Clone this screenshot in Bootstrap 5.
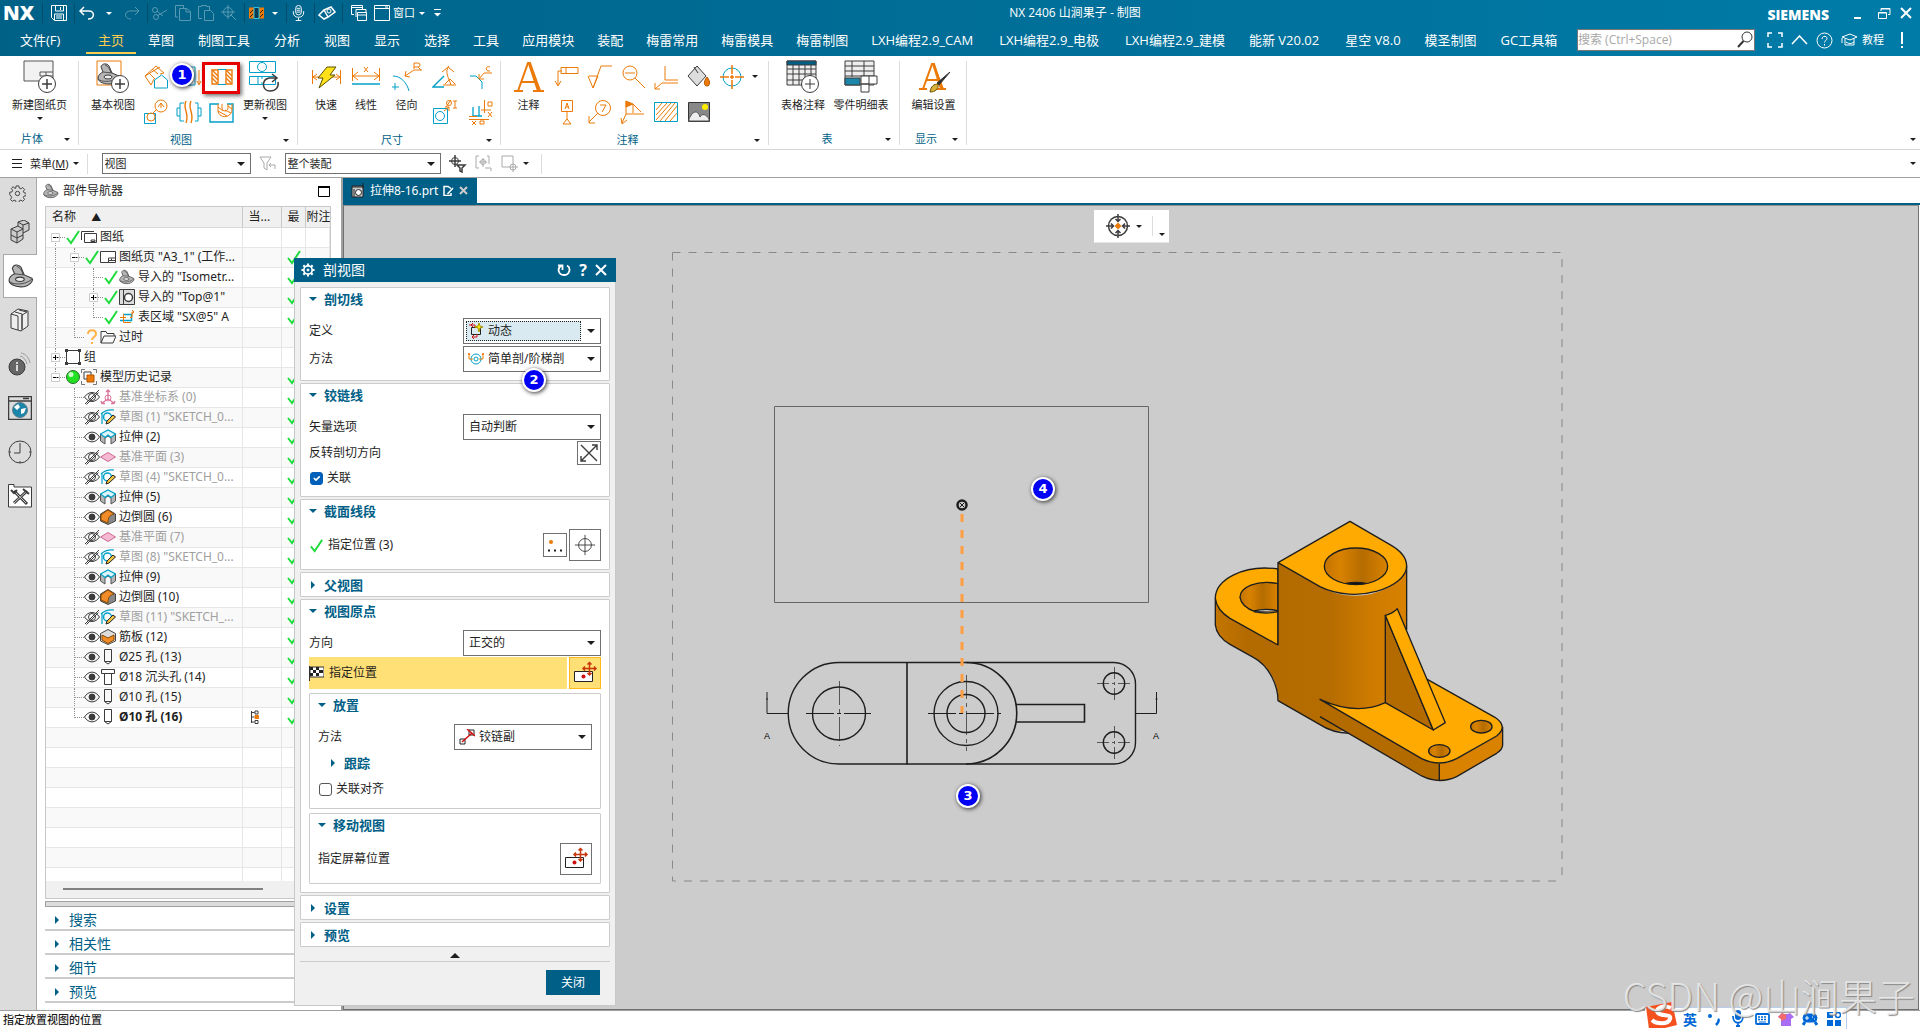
<!DOCTYPE html>
<html lang="zh-CN">
<head>
<meta charset="utf-8">
<meta name="viewport" content="width=device-width, initial-scale=1">
<title>NX 2406 - 制图</title>
<link href="https://cdn.jsdelivr.net/npm/bootstrap@5.3.0/dist/css/bootstrap.min.css" rel="stylesheet">
<script src="https://cdn.jsdelivr.net/npm/bootstrap@5.3.0/dist/js/bootstrap.bundle.min.js"></script>
<style>
:root{--teal:#005f87;--or:#ec7a08;--cy:#00a0c8;--dk:#3c3c3c}
body{font:12px/16px "Noto Sans","Noto Sans CJK SC",sans-serif;color:#1e1e1e;background:#fff;overflow:hidden}
svg{flex:none;display:block;fill:none;stroke:currentColor}
button{background:none;border:0;padding:0;color:inherit;font:inherit}
.o{stroke:var(--or)}.c{stroke:var(--cy)}.k{stroke:var(--dk)}.w{fill:#fff}
.caret{width:0;height:0;border:4px solid transparent;border-top-color:currentColor;border-bottom:0;flex:none}
.caret.sm{border-width:3px;border-bottom:0}
.ui-head{background:linear-gradient(90deg,#006187,#007ba8);color:#fff;height:56px;font-family:"Open Sans","Noto Sans CJK SC",sans-serif}
.title-row{height:26px}
.title-row .tool{width:23px;height:26px;display:flex;align-items:center;justify-content:center}
.dim{opacity:.35}
.vsep{width:1px;height:20px;background:#004c6b;flex:none}
.lsep{width:1px;height:20px;background:#dcdcdc;flex:none}
.tiny{font-size:11px}
.logo-nx{font-size:20px;font-weight:800;width:42px;padding-left:3px}
.doc-title{left:230px;right:0;text-align:center;pointer-events:none}
.brand{font:800 14px/16px "Open Sans",sans-serif}
.tab-row{height:28px}
.tab-row .ribbon-tab{color:#fff;font-size:13px;line-height:24px;padding:2px 12px 0;height:28px;text-decoration:none;white-space:nowrap;border-bottom:2px solid transparent}
.tab-row .ribbon-tab:nth-child(n+9):nth-child(-n+15){padding-left:11px}
.tab-row .ribbon-tab.lat{padding-right:14px}
.tab-row .ribbon-tab.active{color:#ffcc4d;border-color:#ffcc4d}
.tab-row .file-tab{width:86px;padding-left:20px}
.find-box{width:178px;height:22px;background:#fff;border:1px solid #777}
.find-box input{border:0;outline:0;width:100%;font-size:12px;padding:0;color:#333}
.find-box input::placeholder{color:#a8a8a8}
.ribbon{height:94px;border-bottom:1px solid #d8d8d8;font-size:11px}
.rgroup{padding-top:3px;position:relative;display:flex;flex-direction:column}
.rgroup::after{content:"";position:absolute;right:0;top:5px;bottom:4px;width:1px;background:#dcdcdc}
.rbody{height:70px;display:flex}
.big{display:flex;flex-direction:column;align-items:center;padding-top:1px;white-space:nowrap}
.big span{margin-top:3px;line-height:16px}
.big .caret{margin-top:4px}
.smalls{display:grid;grid-auto-flow:column;grid-template-rows:35px 35px;grid-auto-columns:33px}
.smalls button{display:flex;align-items:center;justify-content:center;position:relative}
.smalls.wide{grid-auto-columns:36px}
.rfoot{height:20px;line-height:16px;display:flex;align-items:center;color:var(--teal);padding-right:9px;margin-top:2px}
.rfoot span{flex:1;text-align:center}
.rfoot .caret,.big .caret{color:#1e1e1e;border-width:3px;border-bottom:0}
.hot{position:absolute;left:-3px;top:3px;width:38px;height:32px;border:3px solid #e60000;box-shadow:2px 2px 4px #777}
.pin{position:absolute;width:24px;height:24px;border-radius:50%;border:2px solid #fff;background:#0000f5;color:#fff;font:700 13px/20px "DejaVu Sans",sans-serif;text-align:center;box-shadow:1px 1px 4px #333;z-index:9}
.filterbar{height:28px;border-bottom:1px solid #a0a0a0}
.filterbar .pick{height:21px;font-size:11px;padding-left:2px}
.after-menu{margin:0 10px 0 8px}
.pick{appearance:none;border:1px solid #707070;border-radius:0;background:#fff url("data:image/svg+xml,%3Csvg xmlns='http://www.w3.org/2000/svg' width='8' height='4'%3E%3Cpath d='M0 0h8l-4 4z' fill='%231e1e1e'/%3E%3C/svg%3E") no-repeat right 5px center;font:inherit;color:inherit;padding:0 16px 0 5px;outline:0}
.strip{width:37px;background:#dcdcdc;border-right:1px solid #a8a8a8}
.strip button{width:36px;height:44px;padding-left:4px;display:flex;align-items:center;justify-content:center;color:var(--dk)}
.strip .first{height:32px;padding:0}
.strip .on{background:#fff;border:1px solid #a8a8a8;border-right:0;margin-left:3px;width:34px;padding:0}
.navi{width:306px;padding:0 10px 0 8px;border-right:2px solid #a0a0a0}
.navi-title{height:26px;gap:4px;margin-bottom:2px;padding-right:1px}
.treebox{height:693px;border:1px solid #c8c8c8;background:#f0f0f0}
.treeview{height:674px;overflow:hidden}
.tree{table-layout:fixed;width:100%;border-collapse:collapse;background:#fff}
.tree th{height:20px;background:#f0f0f0;font-weight:400;border-right:1px solid #c8c8c8;border-bottom:1px solid #d8d8d8;padding:0 0 0 6px;overflow:hidden;white-space:nowrap}
.tree th:last-child{padding-left:1px;border-right:0}
.tree td{height:20px;padding:0;border-right:1px solid #e6e6e6;border-bottom:1px solid #e6e6e6;overflow:hidden;white-space:nowrap}
.tree tr:nth-child(even) td{background:#f9f9f9}
.sorted{font-size:10px;margin-left:12px}
.node{display:flex;align-items:center;height:19px}
.node .lbl{margin-left:3px}
.off .lbl{color:#a0a0a0}
.slot{width:19px;height:19px;position:relative;flex:none}
.slot::before{content:"";position:absolute;left:9px;top:0;bottom:-1px;border-left:1px dotted #909090}
.slot.n::before{display:none}.slot.d::before{top:10px}.slot.u::before{bottom:9px}
.slot.t::after{content:"";position:absolute;left:10px;right:0;top:9px;border-top:1px dotted #909090}
.slot svg{position:absolute;left:5px;top:5px;background:#fff}
.hscroll{height:2px;background:#808080;width:200px;margin:7px 0 0 17px}
.split{height:6px;margin:2px -2px 0 0;background:#dcdcdc;border:1px solid #a0a0a0}
.fold{height:24px;border-bottom:2px solid #ccc;color:var(--teal);font-size:14px;gap:10px;padding:3px 0 0 10px;width:100%}
.tri-r{width:0;height:0;border:4px solid transparent;border-left-color:var(--teal);border-right:0;flex:none}
.tri-d{width:0;height:0;border:4px solid transparent;border-top-color:var(--teal);border-bottom:0;flex:none}
.work{min-width:0}
.part-tabs{height:27px;border-bottom:2px solid var(--teal)}
.part-tab{background:var(--teal);color:#fff;padding:0 9px 0 8px;gap:5px}
.sheet{background:#ccc;border:1px solid #707070;border-top-color:#909090;margin-right:1px;overflow:hidden}
.sheet>svg{width:100%;height:100%}
.floatbar{position:absolute;left:750px;top:4px;height:33px;background:#fff;gap:6px;padding:0 4px 0 12px;border-bottom:1px solid #e6e6e6}
.floatbar .more{margin:16px 0 0 0}
.dlg{position:absolute;left:294px;top:80px;width:322px;background:#f0f0f0;border:1px solid #c8c8c8;border-top:0;z-index:5;padding-bottom:10px}
.dlg-head{background:var(--teal);color:#fff;height:24px;font-size:14px;padding:0 9px 0 7px;gap:8px;margin:0 -1px}
.dlg-head .ask{font-size:16px;font-weight:700}
.dlg-body{padding:5px 5px 0}
.grp{border:1px solid #ccc;background:#fff;padding:0 8px 5px;margin-bottom:2px;border-radius:1px}
.grp .grp{margin-bottom:4px}
.grp.cut{padding-bottom:7px}
.grp.shut{padding-bottom:0}
.grp.shut .gh{height:23px}
.gh{height:22px;color:var(--teal);font-weight:700;font-size:13px;gap:7px;width:100%;display:flex;align-items:center}
.gh .tri-r{margin:0 2px}
.gh.sub{padding-left:11px;height:24px}
.fr{min-height:28px;display:flex;align-items:center;justify-content:space-between}
.gh:not(.sub)+.fr{margin-top:7px}
.fr.tall{min-height:32px}
.fr.chk{justify-content:flex-start;gap:4px;padding-left:1px}
.dlg .pick{width:138px;height:26px}
.dlg .pick.ic{padding-left:24px}
.pickwrap{position:relative}
.pickwrap svg{position:absolute;left:5px;top:5px}
.pick.dyn{background-image:url("data:image/svg+xml,%3Csvg xmlns='http://www.w3.org/2000/svg' width='8' height='4'%3E%3Cpath d='M0 0h8l-4 4z' fill='%231e1e1e'/%3E%3C/svg%3E"),linear-gradient(90deg,#d9ebf0 117px,#fff 117px);background-position:right 5px center,0 0;box-shadow:inset 0 0 0 2px #fff}
.pick.dyn+i{position:absolute;left:3px;top:3px;width:115px;height:20px;border:1px dotted #222;pointer-events:none}
.ib{width:24px;height:24px;border:1px solid #707070;background:#fff;display:flex;align-items:center;justify-content:center}
.ib.lg{width:32px;height:32px}
.ib.hotbtn{background:#ffe076;border-color:#ffb81c}
.gapb{margin-left:2px}
.dlg .form-check-input{width:13px;height:13px;margin:0;border:1px solid #555;border-radius:3px;float:none;box-shadow:none}
.dlg .form-check-input:checked{background-color:#005fb8;border-color:#005fb8}
.target{background:#ffe076;flex:1;height:32px;gap:5px}
.collapse-bar{height:13px;border-bottom:1px solid #ccc}
.dlg-foot{padding:8px 10px 0 0}
.close-btn{background:var(--teal);color:#fff;width:54px;height:25px}
.status{height:19px;border-top:1px solid #a0a0a0;font-size:11px;font-weight:500;padding:1px 3px}
.ime{position:absolute;right:73px;bottom:0;height:22px;width:202px;background:#fff;border:1px solid #b9cdea;border-bottom:0;border-left:0;color:#0068d6;z-index:2}
.ime .mk{width:24px;display:flex;justify-content:center;flex:none}
.ime b{font-size:14px;font-family:"Noto Sans CJK SC",sans-serif}
.ime .sogou{margin-top:-10px}
.wm{position:absolute;right:5px;bottom:14px;font:300 38px/40px "Noto Sans CJK SC",sans-serif;color:rgba(238,238,238,.85);text-shadow:1px 1px 1px #888;z-index:3;white-space:nowrap}
</style>
</head>
<body class="d-flex flex-column vh-100 position-relative">
<svg width="0" height="0" class="position-absolute">
<defs>
<symbol id="ok" viewBox="0 0 16 16"><path d="M2 9l4 5 8-12" stroke="#1fdc3c" stroke-width="2"/></symbol>
<symbol id="clip" viewBox="0 0 24 24"><path d="M1 16c0-3 3-5 5-6L4 5c1-4 6-4 8-1l3 7 7 3c2 2-2 8-10 8-7 0-11-3-11-6z" fill="#b5b5b5" stroke="#3c3c3c"/><path d="M6 10l9 1M8 3c3 1 5 4 6 8M1 17c3 3 14 4 21-2" stroke="#3c3c3c" stroke-width=".8"/><ellipse cx="11" cy="15" rx="4" ry="2" fill="#eee" stroke="#3c3c3c"/></symbol>
<symbol id="sheetpg" viewBox="0 0 16 16"><path d="M.5 2.500h15v11H.5zM8.500 13V9h7M8 11.500h7M11.500 9.500v2" stroke="#3c3c3c" fill="#fff"/></symbol>
<symbol id="sheets" viewBox="0 0 16 16"><path d="M.5 11V2.500H13" stroke="#3c3c3c"/><path d="M3.500 4.500h12v9h-12zM10 11h4v1.500h-4z" stroke="#3c3c3c" fill="#fff"/></symbol>
<symbol id="topv" viewBox="0 0 16 16"><path d="M.5.5h15v15H.5zM4.500 1v14" stroke="#3c3c3c" fill="#ddd"/><circle cx="9.500" cy="8.500" r="4" stroke="#3c3c3c" fill="#fff" stroke-width="1.500"/></symbol>
<symbol id="secv" viewBox="0 0 16 16"><path d="M4 5.500h8.500v6H1" stroke="#00a0c8" stroke-width="1.500"/><path d="M4.500 5v8.500H12M1 8.500h6M11 8.500h2V3h2M13 1l2 2-2 2" stroke="#ec7a08"/></symbol>
<symbol id="ask" viewBox="0 0 16 16"><path d="M4 5c0-5 8-5 8 0 0 3-4 3-4 6M8 13v2" stroke="#ffb347" stroke-width="2"/></symbol>
<symbol id="dir" viewBox="0 0 16 16"><path d="M1 14V2.500h5l1 2h7V7M1 14L4 7h12l-3 7z" stroke="#3c3c3c"/></symbol>
<symbol id="grpi" viewBox="0 0 16 16"><path d="M1.500 1.500h13v13h-13z" stroke="#3c3c3c"/><path d="M0 0h3v3H0zM13 0h3v3h-3zM0 13h3v3H0zM13 13h3v3h-3z" fill="#3c3c3c" stroke="none"/></symbol>
<symbol id="ball" viewBox="0 0 16 16"><circle cx="8" cy="8" r="6.500" fill="#22e022" stroke="#2b6b2b"/><circle cx="6" cy="5.500" r="2.500" fill="#c9ffc9" stroke="none"/></symbol>
<symbol id="hist" viewBox="0 0 16 16"><path d="M.5 4V.5H4M12 .5h3.500V4M15.500 12v3.500H12M4 15.500H.5V12" stroke="#777"/><path d="M3 3h7v7H3z" stroke="#3c3c3c" fill="#fff"/><path d="M6 6h7v7H6z" fill="#ec7a08" stroke="#b35500"/></symbol>
<symbol id="eye" viewBox="0 0 16 16"><path d="M.5 8c4-6.500 11-6.500 15 0-4 6.500-11 6.500-15 0z" stroke="#3c3c3c"/><circle cx="8" cy="8" r="3" fill="#3c3c3c" stroke="#3c3c3c"/></symbol>
<symbol id="eyeoff" viewBox="0 0 16 16"><path d="M.5 8c4-6 11-6 15 0-4 6-11 6-15 0zM1 15L15 1M2.500 15.500l12-12" stroke="#3c3c3c"/><circle cx="8" cy="8" r="3.500" stroke="#3c3c3c"/></symbol>
<symbol id="csys" viewBox="0 0 16 16"><path d="M8 1v9l-6 4M8 10l6 4M6 3l2-2 2 2M1 12l1 2.500h3M15 12l-1 2.500h-3" stroke="#d9749c" stroke-width="1.300"/><circle cx="8" cy="9" r="3" stroke="#d9749c"/></symbol>
<symbol id="sk" viewBox="0 0 16 16"><path d="M2 15V4M1 5C6 0 11 1 14 1" stroke="#00a0c8" stroke-width="1.200"/><circle cx="7.500" cy="8" r="4" stroke="#00a0c8" stroke-width="1.500"/><path d="M6 15l1-3 6-6 2.500 2-6.500 6z" fill="#f0c040" stroke="#222"/></symbol>
<symbol id="ext" viewBox="0 0 16 16"><path d="M.5 5v7l4.500 3V9l3-2 3 2v6l4.500-3V5z" fill="#b5b5b5" stroke="#555"/><path d="M.5 5L8 1l7.500 4L11 8.500 8 6 5 8.500z" fill="#dff4f8" stroke="#00a0c8" stroke-width="1.200"/></symbol>
<symbol id="pln" viewBox="0 0 16 16"><path d="M.5 8L8 3.500 15.500 8 8 12.500z" fill="#f6b8d2" stroke="#c9688f"/></symbol>
<symbol id="blend" viewBox="0 0 16 16"><path d="M.5 5L8 .5 15.500 5v7L8 15.500.5 12z" fill="#888" stroke="#444"/><path d="M1 6c3-2 5-4 7-5l6 4c-4 1-6 3-6 9L1 11z" fill="#f28c28" stroke="#8a4a00"/></symbol>
<symbol id="rib" viewBox="0 0 16 16"><path d="M.5 4.500L8 .5l7.500 4v7.500L8 15.500.5 12z" fill="#ddd" stroke="#444"/><path d="M2 6l6 3 6-3v5l-6 3.500L2 11z" fill="#f28c28" stroke="#8a4a00"/></symbol>
<symbol id="hole" viewBox="0 0 16 16"><path d="M4.500.5h7v12L8 15l-3.500-2.500zM4.500 12.500h7" stroke="#3c3c3c"/></symbol>
<symbol id="cbore" viewBox="0 0 16 16"><path d="M1.500.5h13v4h-13zM4.500 4.500v11h7v-11" stroke="#3c3c3c"/></symbol>
<symbol id="cur" viewBox="0 0 16 16"><path d="M4.500 2v12M4.500 3.500h3M4.500 8h3M4.500 13h3M8 2h3v3H8zM8 11.500h3v3H8z" stroke="#3c3c3c"/><path d="M8 6.500h3.500v3H8z" fill="#ec7a08" stroke="#ec7a08"/></symbol>
<symbol id="plus" viewBox="0 0 9 9"><path d="M.5.5h8v8h-8z" stroke="#ccc"/><path d="M2 4.500h5M4.500 2v5" stroke="#000"/></symbol>
<symbol id="minus" viewBox="0 0 9 9"><path d="M.5.5h8v8h-8z" stroke="#ccc"/><path d="M2 4.500h5" stroke="#000"/></symbol>
<symbol id="movev" viewBox="0 0 24 24"><path d="M1.500 10.500h18v10h-18z" fill="#fff" stroke="#222"/><path d="M16.500 1v13M10 7.500h13M14.500 3.500l2-2 2 2M14.500 12l2 2 2-2M12 5.500l-2 2 2 2M21 5.500l2 2-2 2" stroke="#c8360c" stroke-width="1.500"/><circle cx="10.500" cy="15.500" r="2" fill="#d01010" stroke="none"/></symbol>
<symbol id="cross" viewBox="0 0 24 24"><circle cx="12" cy="12" r="7"/><path d="M12 1v22M1 12h22"/></symbol>
<symbol id="gear" viewBox="0 0 18 18"><path d="M7.500 1h3l.4 2.300 1.700.7 1.900-1.300 2 2-1.300 1.900.7 1.700 2.300.4v2.600l-2.300.4-.7 1.700 1.300 1.900-2 2-1.900-1.300-1.700.7-.4 2.300h-3l-.4-2.300-1.700-.7-1.900 1.300-2-2 1.300-1.900-.7-1.700L.8 10.300V7.700l2.300-.4.700-1.700-1.300-1.900 2-2L6.400 4l.7-.7z"/><circle cx="9" cy="9" r="2.300"/></symbol>
<symbol id="gearb" viewBox="0 0 16 16"><circle cx="8" cy="8" r="4.800" stroke-width="2"/><circle cx="8" cy="8" r="1.200" fill="currentColor"/><path d="M8 .5V3M8 13v2.500M.5 8H3M13 8h2.500M2.700 2.700l1.800 1.800M11.500 11.500l1.800 1.800M2.700 13.300l1.800-1.800M11.500 4.500l1.800-1.800" stroke-width="2.400"/></symbol>
<symbol id="mic" viewBox="0 0 16 18"><rect x="5" y="1" width="6" height="10" rx="3"/><path d="M2.500 7v2c0 6 11 6 11 0V7M8 14v3M5 17h6M6 4h4M6 6h4M6 8h4"/></symbol>
</defs>
</svg>

<header class="ui-head flex-shrink-0">
 <div class="title-row d-flex align-items-center position-relative">
  <span class="logo-nx">NX</span><span class="vsep"></span>
  <button class="tool ms-1" aria-label="保存"><svg width="16" height="16"><path d="M.5.5h15v15H3.500l-3-3zM4.500 1v5h8V1M9.500 2v3M3.500 15V9h9v6M5 11h6M5 13h6"/></svg></button>
  <span class="vsep ms-1"></span>
  <button class="tool" aria-label="撤消"><svg width="16" height="14"><path d="M5 1L1 5l4 4M1 5h9c6 0 6 8-1 8" stroke-width="1.500"/></svg></button>
  <span class="caret sm mx-2"></span>
  <button class="tool dim" aria-label="重做"><svg width="16" height="14"><path d="M11 1l4 4-4 4M15 5H6c-6 0-6 8 1 8"/></svg></button>
  <span class="vsep ms-1"></span>
  <button class="tool dim" aria-label="剪切"><svg width="16" height="16"><path d="M5 11L15 5M5 6l6 5"/><circle cx="3" cy="5" r="2.500"/><circle cx="4" cy="12" r="2.500"/></svg></button>
  <button class="tool dim" aria-label="复制"><svg width="16" height="16"><path d="M3 12H.5V.5h8V3M4.500 3.500h7l4 3v9h-11zM11 4v3h4"/></svg></button>
  <button class="tool dim" aria-label="粘贴"><svg width="16" height="16"><path d="M4 13.500H.5v-12h3V.5h5v1h3V5M6.500 5.500h6l3 3v7h-9z"/></svg></button>
  <button class="tool dim" aria-label="定位"><svg width="16" height="16"><circle cx="7" cy="7" r="4.500"/><path d="M7 0v14M0 7h14M9 9l6 6"/></svg></button>
  <span class="vsep ms-1"></span>
  <button class="tool" aria-label="剖视图"><svg width="15" height="12"><path d="M0 .5h15v11H0z" fill="#ec7a08" stroke="none"/><path d="M5 .5h5v11H5z" fill="#063b52" stroke="#29c4e8"/><path d="M1 10l3-3M1 6l3-3M11 10l3-3M11 6l3-3" stroke="#222"/></svg></button>
  <span class="caret sm mx-1"></span><span class="vsep ms-1"></span>
  <button class="tool" aria-label="语音"><svg width="15" height="18"><use href="#mic"/></svg></button>
  <span class="vsep ms-1"></span>
  <button class="tool" aria-label="触控"><svg width="18" height="14"><path d="M1 9l5-5 7-3 4 5-7 5-4 2zM6 4l4 7" stroke-width="1.500"/><circle cx="11" cy="5" r="2"/></svg></button>
  <span class="vsep mx-1"></span>
  <button class="tool" aria-label="层叠窗口"><svg width="16" height="16"><path d="M3 9.500H.5v-9h11V4M.5 2.500h11M5 12V4.500h10V8" /><path d="M6.500 7.500h9v8h-9zM6.500 10h9"/></svg></button>
  <button class="tool" aria-label="窗口"><svg width="16" height="16"><path d="M.5.5h15v15H.5zM.5 3.500h15M11 2h3"/></svg></button>
  <span class="tiny">窗口</span><span class="caret sm ms-1 me-1"></span>
  <svg class="ms-1" width="9" height="10"><path d="M1 1.500h7"/><path d="M1 5h7L4.500 8.500z" fill="#fff" stroke="none"/></svg>
  <div class="doc-title position-absolute">NX 2406 山涧果子 - 制图</div>
  <div class="ms-auto d-flex align-items-center pe-2">
   <span class="brand me-4 mt-1">SIEMENS</span>
   <button class="me-3" aria-label="最小化"><svg width="9" height="14"><path d="M1 12h7" stroke-width="2"/></svg></button>
   <button class="me-2" aria-label="还原"><svg width="14" height="13"><path d="M3 4V1.500h9v6H10M.5 5.500h8v6h-8zM3 2h9M1 6h7"/></svg></button>
   <button aria-label="关闭窗口"><svg width="12" height="12"><path d="M1 1l10 10M11 1L1 11" stroke-width="2"/></svg></button>
  </div>
 </div>
 <nav class="tab-row d-flex align-items-center">
  <a href="#" class="ribbon-tab file-tab">文件(F)</a>
  <a href="#" class="ribbon-tab active">主页</a><a href="#" class="ribbon-tab">草图</a><a href="#" class="ribbon-tab">制图工具</a><a href="#" class="ribbon-tab">分析</a><a href="#" class="ribbon-tab">视图</a><a href="#" class="ribbon-tab">显示</a><a href="#" class="ribbon-tab">选择</a><a href="#" class="ribbon-tab">工具</a><a href="#" class="ribbon-tab">应用模块</a><a href="#" class="ribbon-tab">装配</a><a href="#" class="ribbon-tab">梅雷常用</a><a href="#" class="ribbon-tab">梅雷模具</a><a href="#" class="ribbon-tab">梅雷制图</a><a href="#" class="ribbon-tab lat">LXH编程2.9_CAM</a><a href="#" class="ribbon-tab lat">LXH编程2.9_电极</a><a href="#" class="ribbon-tab">LXH编程2.9_建模</a><a href="#" class="ribbon-tab lat">能新 V20.02</a><a href="#" class="ribbon-tab">星空 V8.0</a><a href="#" class="ribbon-tab">模圣制图</a><a href="#" class="ribbon-tab">GC工具箱</a>
  <div class="find-box d-flex align-items-center ms-auto"><input type="text" placeholder="搜索 (Ctrl+Space)" aria-label="搜索"><svg width="18" height="18" style="color:#333"><circle cx="11" cy="6" r="5"/><path d="M7.500 10L2 16" stroke-width="2"/></svg></div>
  <div class="d-flex align-items-center ps-2 pe-3">
   <button class="mx-1 me-2" aria-label="全屏"><svg width="16" height="16"><path d="M1 5V1h4M11 1h4v4M15 11v4h-4M5 15H1v-4" stroke-width="1.500"/></svg></button>
   <button class="me-2" aria-label="最小化功能区"><svg width="17" height="10"><path d="M1 9l7.500-8L16 9" stroke-width="1.500"/></svg></button>
   <button class="me-2" aria-label="帮助"><svg width="17" height="17"><circle cx="8.500" cy="8.500" r="7.500"/><path d="M6 7c0-3.500 5-3.500 5-.5 0 2-2.500 2-2.500 4M8.500 12v1.500"/></svg></button>
   <button class="d-flex align-items-center tiny"><svg class="me-1" width="17" height="14"><path d="M1 4l8-3 7 3-7 3zM4 6v6h9V6M1 5v5M5 9c3 2 5 2 8 0"/></svg>教程</button>
   <svg class="ms-3" width="4" height="17"><path d="M2 0v12M2 14v2" stroke-width="2"/></svg>
  </div>
 </nav>
</header>

<section class="ribbon d-flex flex-shrink-0 position-relative">
 <div class="rgroup" style="width:79px"><div class="rbody justify-content-center"><button class="big"><svg width="34" height="34"><path d="M1 1h29v20H1z" fill="#f2f2f2" stroke="#555"/><path d="M17 16v-4h13M17 16h13M23 12v4" stroke="#555"/><circle cx="24" cy="24" r="8.500" fill="#fff" class="k"/><path d="M19 24h10M24 19v10" class="k" stroke-width="1.500"/></svg><span>新建图纸页</span><i class="caret"></i></button></div><div class="rfoot"><span>片体</span><i class="caret"></i></div></div>
 <div class="rgroup" style="width:219px"><div class="rbody ps-2"><button class="big" style="width:52px"><svg width="34" height="34"><path d="M1 1h24v24H1z" class="o"/><use href="#clip" x="1" y="2" width="24" height="24"/><circle cx="24" cy="24" r="8.500" fill="#fff" class="k"/><path d="M19 24h10M24 19v10" class="k" stroke-width="1.500"/></svg><span>基本视图</span></button>
  <div class="smalls">
   <button aria-label="投影视图"><svg width="26" height="26"><path d="M2 12L13 2l8 7-4 1M2 12l6 9 3-6M2 12l15-9M6 9l6 6M9 5l6 5" class="o"/><path d="M11.500 24V16l7-5 6 5v8z" class="c w"/></svg></button>
   <button aria-label="局部放大图"><svg width="26" height="26"><path d="M1.500 14.500h11v10h-11z" class="c"/><circle cx="8" cy="18" r="4" class="o"/><circle cx="18" cy="7" r="6" class="o"/><path d="M10 14l4-4M15 8l3-4 3 4M18 4v5" class="o"/></svg></button>
   <button aria-label="视图"><svg width="26" height="26"><path d="M7 3h12v18H7zM7 21h8" class="c"/><path d="M23 6v14M21 17l2 4 2-4" class="o"/></svg></button>
   <button aria-label="断开视图"><svg width="26" height="26"><path d="M8 4H4v18h4M4 9H1v8h3M19 4h3v18h-3M22 9h3v8h-3" class="c"/><path d="M10 2c-4 8 4 12 0 22M15 2c-4 8 4 12 0 22" class="o" stroke-width="1.400"/></svg></button>
   <button aria-label="剖视图命令"><svg width="22" height="16"><path d="M1 1h6v14H1zM15 1h6v14h-6z" class="o" stroke-width="1.400"/><path d="M7 .5h8M7 15.500h8" class="c"/><path d="M1 5l6 6M1 9l5 5M1 1l6 6M15 5l6 6M15 9l5 5M15 1l6 6" class="o" stroke-width="1.400"/></svg><span class="hot"></span></button>
   <button aria-label="局部剖"><svg width="26" height="22"><path d="M10 3H1v18h23V3h-6" class="c" stroke-width="1.400"/><path d="M9 3v6c0 9 14 9 14-1V3M13 3v4c0 4 6 4 6 0V3M9 10l9 5M9 6l5 4M16 9l6 3M19 5l4 3" class="o"/></svg></button>
  </div>
  <button class="big" style="width:54px"><svg width="34" height="34"><path d="M1.500 1.500h26v11h-26zM1.500 16.500h26v8h-26zM10 17v7M14 17v2M14 22v2" class="c w"/><circle cx="14" cy="7" r="4.500" class="c"/><path d="M28 18h-7c-8 2-7 13 1 13 6 0 9-4 8-9M24 14l5 4-5 4" class="k" stroke-width="1.500"/></svg><span>更新视图</span><i class="caret"></i></button></div><div class="rfoot"><span>视图</span><i class="caret"></i></div></div>
 <div class="rgroup" style="width:203px"><div class="rbody ps-2"><button class="big" style="width:40px"><svg width="32" height="34"><path d="M2.500 10v14M30.500 10v14M3 17h8M21 17h9M7 14l-4 3 4 3M26 14l4 3-4 3" class="o"/><path d="M17 7h9l-6 8h5L9 28l4-10H8z" fill="#ffe11a" stroke="#5a5000"/></svg><span>快速</span></button><button class="big" style="width:40px"><svg width="32" height="34"><path d="M2.500 8v13M29.500 8v13M3 16h26M8 12l-5 4 5 4M24 12l5 4-5 4M14 7l4 5M18 7l-4 5" class="o"/><path d="M2 24h28" class="c" stroke-width="1.500"/></svg><span>线性</span></button><button class="big" style="width:41px"><svg width="34" height="34"><path d="M3 16c8 0 14 7 16 15M5 23v7M2 27h7" class="c"/><path d="M32 10h-8l-9 6M16 11l-1 5 5 1M24 9V3h4q2 0 2 2t-2 2h-4M28 7l3 3" class="o"/></svg><span>径向</span></button>
  <div class="smalls wide">
   <button aria-label="角度"><svg width="26" height="26"><path d="M12 23H1L12 12" class="c" stroke-width="1.400"/><path d="M17 2c-5 6 0 12 2 19M10 8l6-5 6 5M13 20l5-5 5 5M11 21h13" class="o"/></svg></button>
   <button aria-label="孔径"><svg width="26" height="26"><path d="M1.500 9.500h14v15h-14z" class="c"/><circle cx="8" cy="17" r="4.500" class="c"/><path d="M12 12l5-4M13 8l4 0 0 4M21 2h4M23 2v7M21 9h4M14 8l5-7" class="o"/><circle cx="17" cy="4" r="2.500" class="o"/></svg></button>
   <button aria-label="倒斜角"><svg width="26" height="26"><path d="M2 12h6l6 6v7" class="c"/><path d="M24 9h-8l-5 6M11 10v5h5M22 3c-5-2-5 5 0 4" class="o"/></svg></button>
   <button aria-label="坐标"><svg width="26" height="26"><path d="M5 8v9h6V7M11 17h3" class="c" stroke-width="1.300"/><path d="M16.500 1v13M1 17.500h8M1 20.500h20M13 11h10M20 3h4v4h-4zM20 13l4 5M24 13l-4 5M4 22l4 4M8 22l-4 4M12 22h4v3h-4z" class="o"/></svg></button>
  </div></div><div class="rfoot"><span>尺寸</span><i class="caret"></i></div></div>
 <div class="rgroup" style="width:268px"><div class="rbody" style="padding-left:6px"><button class="big" style="width:43px"><svg width="32" height="34"><path d="M1 31h9M20 31h11M5 31L15 3h2l10 28M9 22h13" class="o" stroke-width="2"/><path d="M15 4l9 27h4L17 3z" fill="#ec7a08" stroke="none"/></svg><span>注释</span></button>
  <div class="smalls">
   <button aria-label="特征控制框"><svg width="26" height="24"><path d="M7 2.500h17v6H7zM12 3v5M8 6H4v14M1 16l3 5 3-5" class="o"/></svg></button>
   <button aria-label="基准特征"><svg width="26" height="26"><path d="M7.500 1.500h11v11h-11zM13 12v9M9 25h8l-4-5zM11 10l2-6 2 6M12 8h3" class="o"/></svg></button>
   <button aria-label="表面粗糙度"><svg width="26" height="26"><path d="M2 12h9L6 24 1 12M6 24L14 2h11" class="o"/></svg></button>
   <button aria-label="符号标注"><svg width="26" height="26"><circle cx="16" cy="9" r="7.500" class="o"/><path d="M11 14L2 23M2 17v7h6M13 6h6l-4 7" class="o"/></svg></button>
   <button aria-label="放大标注"><svg width="26" height="26"><circle cx="10" cy="9" r="7" class="o"/><path d="M5 9h10M15 14l10 10" class="o"/></svg></button>
   <button aria-label="焊接符号"><svg width="26" height="26"><path d="M24 15H6L2 24M1 19l1 6 5-4M6 15V2M13 14V5l8 8" class="o"/><path d="M6 2l7 3-7 3z" fill="#ec7a08" class="o"/></svg></button>
   <button aria-label="中心标注"><svg width="26" height="26"><path d="M12 2v14h13M25 19H9l-7 6M2 19v6h5" class="o"/></svg></button>
   <button aria-label="剖面线"><svg width="24" height="20"><path d="M.5.5h23v19H.5z" class="c"/><path d="M2 8l6-7M2 13L13 1M2 18L17 1M6 19L21 1M11 19L23 4M16 19l7-8" class="o"/></svg></button>
   <button aria-label="区域填充"><svg width="26" height="26"><path d="M2 12L11 2l9 10-9 10z" fill="#ddd" class="k"/><path d="M8 3l4 6" class="k"/><path d="M21 13c4 5 3 9 0 9s-4-4 0-9z" fill="#ec7a08" stroke="#b35500"/></svg></button>
   <button aria-label="图像"><svg width="22" height="20"><path d="M.5.5h21v19H.5z" fill="#888" stroke="#333"/><circle cx="17" cy="5" r="3" fill="#ffee00" stroke="none"/><path d="M1 17c4-9 9-9 11-2 2-4 6-3 9 2v2H1z" fill="#eee" stroke="#555"/></svg></button>
   <button aria-label="中心标记"><svg width="26" height="26"><circle cx="13" cy="13" r="9" class="c"/><path d="M13 1v9M13 16v9M1 13h9M16 13h9M11 13h4M13 11v4" class="o" stroke-width="1.500"/></svg></button>
  </div><i class="caret sm ms-1 mt-3"></i></div><div class="rfoot"><span>注释</span><i class="caret"></i></div></div>
 <div class="rgroup" style="width:131px"><div class="rbody ps-1"><button class="big" style="width:60px"><svg width="34" height="34"><path d="M1 1h29v24H1zM1 9h29M1 14h29M1 20h29M7 5v20M13 5v20M19 5v20M25 5v20" class="k" fill="#eee"/><path d="M1 1h29v4H1z" fill="#005f87" class="k"/><circle cx="24" cy="24" r="8.500" fill="#fff" class="k"/><path d="M19 24h10M24 19v10" class="k"/></svg><span>表格注释</span></button><button class="big" style="width:56px"><svg width="34" height="34"><path d="M1 1h29v24H1zM1 6h29M1 11h29M1 16h29M8 1v16M20 1v16" class="k" fill="#eee"/><path d="M1 18h15v7H1z" fill="#1c86aa" class="k"/><path d="M17 16h16v8H17zM17 24h8v8h-8zM25 16v8" class="k w"/></svg><span>零件明细表</span></button></div><div class="rfoot"><span>表</span><i class="caret"></i></div></div>
 <div class="rgroup" style="width:67px"><div class="rbody justify-content-center"><button class="big"><svg width="34" height="34"><path d="M2 29h8M19 29h10M6 29L15 4h2l8 25M9 20h12" class="o" stroke-width="2"/><path d="M15 4l8 25h4L17 3z" fill="#ec7a08" stroke="none"/><path d="M33 12L22 25l-2-2z" fill="#333" stroke="#333"/><path d="M13 32c1-6 4-8 8-8 1 5-3 8-8 8z" fill="#d9b13a" stroke="#6b5000"/></svg><span>编辑设置</span></button></div><div class="rfoot"><span>显示</span><i class="caret"></i></div></div>
 <i class="caret sm ms-auto align-self-end me-1 mb-2"></i>
 <span class="pin" style="left:170px;top:7px">1</span>
</section>

<section class="filterbar d-flex align-items-center flex-shrink-0 ps-2">
 <button class="d-flex align-items-center ms-1"><svg class="me-2" width="10" height="11"><path d="M0 1.500h10M0 5.500h10M0 9.500h10"/></svg><span class="tiny">菜单(<u>M</u>)</span><i class="caret sm ms-1"></i></button>
 <span class="lsep after-menu"></span>
 <select class="pick ms-1" style="width:149px" aria-label="选择过滤器"><option>视图</option></select>
 <svg class="mx-2" width="18" height="18" style="color:#aaa"><path d="M1 2h11L8 8v7l-3-2V8zM11 10h5v4M12 8l-2 2 2 2"/></svg>
 <select class="pick" style="width:156px" aria-label="选择范围"><option>整个装配</option></select>
 <svg class="ms-2 k" width="18" height="18"><circle cx="6" cy="6" r="3.500"/><path d="M6 0v12M0 6h12M8 10h8l-3 3v4l-2-1v-3z" stroke-width="1.500"/></svg>
 <svg class="ms-2" style="color:#aaa" width="18" height="18"><path d="M4 1H1v12h3M12 1h2v8M8 3v9M4 7h8M10 13h6v3"/><circle cx="8" cy="7" r="2.500"/></svg>
 <svg class="ms-2" style="color:#aaa" width="18" height="18"><path d="M7 12H1V1h11v6"/><circle cx="12" cy="12" r="3"/><path d="M12 7v10M7 12h10"/></svg>
 <i class="caret sm mx-1"></i>
 <span class="lsep ms-2"></span>
 <i class="caret sm ms-auto me-1"></i>
</section>

<main class="d-flex flex-grow-1 position-relative" style="min-height:0">
 <aside class="strip d-flex flex-column flex-shrink-0">
  <button class="first" aria-label="资源条选项"><svg width="18" height="18"><use href="#gear" width="17" height="17"/></svg></button>
  <button aria-label="装配导航器"><svg width="20" height="24"><path d="M1 9l7-3V2l6-2 5 3v7l-6 3v6l-6 4-6-3z" fill="#ccc"/><path d="M1 9l6 3 6-3M7 12v11M8 6l5 3M8 2l5 3 6-2M13 5v8M1 15l6 3 6-3"/></svg></button>
  <button class="on" aria-label="部件导航器"><svg width="26" height="26"><use href="#clip" width="26" height="26"/></svg></button>
  <button aria-label="重用库"><svg width="20" height="24"><path d="M1 6L8 1l10 2v15l-7 5-10-3zM1 6l7 2v14M5 4l7 2v15M9 2l8 2-5 3M12 7v15" fill="#eee"/></svg></button>
  <button aria-label="信息"><svg width="24" height="24"><circle cx="9" cy="15" r="8" fill="#666"/><path d="M9 13v6M9 10v2" stroke="#fff" stroke-width="1.500"/><path d="M12 4c4 1 6 4 7 8M13 1c5 1 8 5 9 10" stroke="#999"/></svg></button>
  <button aria-label="Web 浏览器"><svg width="24" height="24"><path d="M.5.5h23v23H.5zM.5 5h23M15 2.500h6" stroke-width="1.500"/><circle cx="12" cy="14" r="7.500" fill="#1c86aa" stroke="#5f7f8c"/><path d="M6 11l4-3 2 3-3 3zM13 13l5-1-2 5-3 1z" fill="#fff" stroke="none"/></svg></button>
  <button aria-label="历史记录"><svg width="24" height="24"><circle cx="12" cy="12" r="11"/><path d="M12 3v10H6M1 12h2M12 21v2M21 12h2"/></svg></button>
  <button aria-label="加工"><svg width="24" height="24"><path d="M.5 3V.5H6V3h17.500v20H.5z" fill="#fff"/><path d="M6 19L19 7M6 7l13 13" stroke-width="3"/><path d="M6 19L19 7M7 8l11 11" stroke="#ccc"/><path d="M3 6l3 3 3-3M15 5l6 5" stroke-width="2"/></svg></button>
 </aside>
 <aside class="navi d-flex flex-column flex-shrink-0">
  <div class="navi-title d-flex align-items-center"><svg width="16" height="16" style="margin-left:-2px"><use href="#clip" width="16" height="16"/></svg>部件导航器<button class="ms-auto" aria-label="停靠"><svg width="12" height="11"><path d="M.5 0v10.500h11V0" stroke="#000"/><path d="M0 1h12" stroke="#000" stroke-width="2"/></svg></button></div>
  <div class="treebox">
   <div class="treeview"><table class="tree"><colgroup><col style="width:196px"><col style="width:39px"><col style="width:24px"><col></colgroup>
    <thead><tr><th>名称 <span class="sorted">▲</span></th><th>当...</th><th>最</th><th>附注</th></tr></thead>
    <tbody id="rows"></tbody></table></div>
   <div class="hscroll"></div>
  </div>
  <div class="split"></div>
  <button class="fold d-flex align-items-center"><i class="tri-r"></i>搜索</button><button class="fold d-flex align-items-center"><i class="tri-r"></i>相关性</button><button class="fold d-flex align-items-center"><i class="tri-r"></i>细节</button><button class="fold d-flex align-items-center"><i class="tri-r"></i>预览</button>
 </aside>
 <section class="work d-flex flex-column flex-grow-1">
  <div class="part-tabs d-flex"><div class="part-tab d-flex align-items-center"><svg width="14" height="15"><path d="M1 3h11v11H1zM12 0v5M3 6v8M1 4h12" stroke="#222" fill="#ccc"/><circle cx="7.500" cy="9.500" r="3" fill="#fff" stroke="#222"/></svg><span>拉伸8-16.prt</span><svg width="11" height="11"><path d="M8 8v2.500H1v-9h4l3 2" stroke-width="1.500"/><path d="M10 3L4.500 9" stroke-width="1.500"/></svg><button aria-label="关闭标签"><svg width="9" height="9"><path d="M1 1l7 7M8 1L1 8" stroke="#ccc" stroke-width="2"/></svg></button></div></div>
  <div class="sheet flex-grow-1 position-relative">
   <svg viewBox="344 206 1574 802" preserveAspectRatio="xMinYMin meet" stroke="#000">
    <defs>
     <linearGradient id="gb" gradientUnits="userSpaceOnUse" x1="294" x2="680" y1="0" y2="0"><stop offset="0" stop-color="#b36b00"/><stop offset=".4" stop-color="#b56c00"/><stop offset=".7" stop-color="#cc7a00"/><stop offset="1" stop-color="#d98200"/></linearGradient>
     <linearGradient id="gh"><stop offset="0" stop-color="#c27400"/><stop offset=".25" stop-color="#d98200"/><stop offset=".6" stop-color="#b56c00"/><stop offset="1" stop-color="#d98200"/></linearGradient>
     <linearGradient id="gl" gradientUnits="userSpaceOnUse" x1="106" x2="200" y1="0" y2="0"><stop offset="0" stop-color="#c47500"/><stop offset="1" stop-color="#b36b00"/></linearGradient>
    </defs>
    <path d="M672.500 252.500H1562V881M672.500 252.500V881H1562" stroke="#888" stroke-dasharray="8 8"/>
    <path d="M774.500 406.500H1148.500V602.500H774.500z" stroke="#666"/>
    <g stroke="#555" stroke-dasharray="24 4 4 4"><path d="M839.500 681v65M966.500 675v76"/></g>
    <path d="M806 713.500h65M928 713.500h76" stroke-dasharray="28 3 4 3"/>
    <path d="M1097 683.500h34M1114.500 667v33M1097 742.500h34M1114.500 726v33" stroke="#555" stroke-dasharray="12 3 3 3"/>
    <g stroke-width="1.400"><path d="M839 662.500H1114A21.500 21.500 0 0 1 1135.500 684V742.500A21.500 21.500 0 0 1 1114 764H839A50.700 50.700 0 0 1 839 662.500z"/>
    <path d="M907 662.500v102M966 662.500A50.700 50.700 0 0 1 966 764M1016.500 704.500h68v17.500h-68" stroke-width="1.600"/>
    <circle cx="839" cy="713.500" r="26.500"/><circle cx="966" cy="713.500" r="32"/><circle cx="966" cy="713.500" r="19"/><circle cx="1114" cy="683.500" r="10.700"/><circle cx="1114" cy="742.500" r="10.700"/></g>
    <path d="M788 713.500H767V692M1136 713.500h20.500V692M766 699h2M1155.500 699h2"/>
    <path d="M962 514v199" stroke="#ff9d42" stroke-width="3" stroke-dasharray="8 8"/>
    <circle cx="962" cy="505" r="4.500" stroke-width="2.500"/><path d="M960 503l4 4M964 503l-4 4"/>
    <g fill="#000" stroke="none" font-family="Liberation Sans" font-size="9" text-anchor="middle"><text x="767" y="739">A</text><text x="1156" y="739">A</text></g>
    <g transform="translate(1180 490) scale(.3333)" stroke-width="4" stroke-linejoin="round">
     <path d="M106 325V405Q110 440 150 463L220 502Q290 540 296 634L420 700V560L294 440z" fill="url(#gl)" stroke="none"/>
     <path d="M294 237C190 222 106 270 106 325Q110 360 150 385L294 465z" fill="#ffaa00"/>
     <path d="M294 281C230 268 180 292 180 322Q184 350 225 365L294 362z" fill="url(#gh)"/><path d="M222 363q36-10 72 0M222 365q36 8 72 0" fill="#ccc"/>
     <path d="M294 218L420 290Q526 345 630 290Q680 262 680 228V560L620 720H508Q460 730 420 705L296 634z" fill="url(#gb)" stroke="none"/>
     <path d="M106 325V405Q110 440 150 463L220 502C270 528 294 590 294 632L420 704Q455 728 508 730M294 465V218M680 228V420"/>
     <path d="M294 218L510 94L630 164Q680 192 680 228C680 292 530 345 420 290z" fill="#ffaa00"/>
     <ellipse cx="528" cy="229" rx="95" ry="55" fill="url(#gh)"/><path d="M498 280q30-6 60 0-30 5-60 0" fill="#000"/>
     <path d="M420 630L725 800Q778 835 830 808L950 740Q968 728 968 710V765Q968 778 950 790L830 860Q778 884 725 858L420 680z" fill="#b36b00" stroke="none"/>
     <path d="M778 822Q805 822 830 808L950 740Q968 728 968 710V765Q968 778 950 790L830 860Q805 872 778 872z" fill="#d98200" stroke="none"/>
     <path d="M420 628Q530 678 616 638L742 568L945 682Q986 710 950 738L830 806Q778 832 725 806z" fill="#ffaa00"/>
     <path d="M968 710V765Q968 778 950 790L830 860Q778 884 725 858L420 680M778 822V870"/>
     <path d="M616 376V638L760 720z" fill="#b36b00"/><path d="M616 376Q640 370 652 356L796 698L760 720z" fill="#ffaa00"/>
     <ellipse cx="904" cy="710" rx="32" ry="19" fill="url(#gh)"/><ellipse cx="778" cy="783" rx="32" ry="19" fill="url(#gh)"/>
    </g>
   </svg>
   <div class="floatbar d-flex align-items-center"><button aria-label="捕捉点"><svg width="24" height="24" class="k"><circle cx="12" cy="12" r="9.500" stroke-width="1.500"/><path d="M12 0v7M12 17v7M0 12h7M17 12h7M9.500 5l2.500 2.500L14.500 5M9.500 19l2.500-2.500 2.500 2.500M5 9.500L7.500 12 5 14.500M19 9.500L16.500 12l2.500 2.500" stroke-width="1.500"/><path d="M12 8.500l3.500 3.500-3.500 3.500L8.500 12z" fill="#ec7a08" stroke="none"/></svg></button><i class="caret sm"></i><span class="lsep ms-1"></span><i class="caret sm more"></i></div>
   <span class="pin" style="left:612px;top:578px">3</span><span class="pin" style="left:687px;top:271px">4</span>
  </div>
 </section>

 <section class="dlg">
  <div class="dlg-head d-flex align-items-center"><svg width="14" height="14"><use href="#gearb" width="14" height="14"/></svg><span class="me-auto">剖视图</span>
   <button aria-label="重置"><svg width="14" height="14"><path d="M4.500 2.500c-5 3-3 9.500 2.500 9.500s7.500-7 3-9.500M1 2.500h4.500V7" stroke-width="1.800"/></svg></button><button aria-label="帮助" class="ask">?</button><button aria-label="关闭对话框"><svg width="12" height="12"><path d="M1 1l10 10M11 1L1 11" stroke-width="2"/></svg></button></div>
  <div class="dlg-body">
   <div class="grp cut"><button class="gh"><i class="tri-d"></i>剖切线</button>
    <div class="fr"><label for="s1">定义</label><div class="pickwrap"><select id="s1" class="pick ic dyn"><option>动态</option></select><i></i><svg width="16" height="16"><path d="M3.500 4.500h9v7h-9z" stroke="#222"/><path d="M1 2h6v3M9 11v3H4M5 0L3 2l2 2M6 12l-2 2 2 2" stroke="#d01010"/><path d="M11 0l1 3 3 1-3 1-1 4-1-4-3-1 3-1z" fill="#ffe800" stroke="#a90"/></svg></div></div>
    <div class="fr"><label for="s2">方法</label><div class="pickwrap"><select id="s2" class="pick ic"><option>简单剖/阶梯剖</option></select><svg width="16" height="16"><circle cx="8" cy="8" r="5" class="c"/><circle cx="8" cy="8" r="2" class="c"/><path d="M1 3v5h4M15 3v5h-4M0 4l1-2 1 2M14 4l1-2 1 2" class="o"/></svg></div></div></div>
   <div class="grp"><button class="gh"><i class="tri-d"></i>铰链线</button>
    <div class="fr"><label for="s3">矢量选项</label><select id="s3" class="pick"><option>自动判断</option></select></div>
    <div class="fr" style="min-height:24px"><span>反转剖切方向</span><button class="ib" aria-label="反转"><svg width="18" height="18" class="k"><path d="M1 1l16 16M17 1L1 17M12 1h5v5M1 12v5h5" stroke-width="1.400"/></svg></button></div>
    <div class="fr chk" style="min-height:26px"><input class="form-check-input" type="checkbox" id="c1" checked><label for="c1">关联</label></div></div>
   <div class="grp pb-2"><button class="gh"><i class="tri-d"></i>截面线段</button>
    <div class="fr tall justify-content-start"><svg width="15" height="15" class="me-1"><use href="#ok" width="15" height="15"/></svg><span class="me-auto">指定位置 (3)</span><button class="ib" aria-label="点对话框"><svg width="18" height="18"><circle cx="5" cy="6" r="2" fill="#ec7a08" stroke="none"/><path d="M2 14.500h2M8 14.500h2M14 14.500h2" stroke="#222" stroke-width="2"/></svg></button><button class="ib lg gapb" aria-label="指定点"><svg width="22" height="22" class="k"><use href="#cross" width="22" height="22"/></svg></button></div></div>
   <div class="grp shut"><button class="gh"><i class="tri-r"></i>父视图</button></div>
   <div class="grp pb-1"><button class="gh"><i class="tri-d"></i>视图原点</button>
    <div class="fr"><label for="s4">方向</label><select id="s4" class="pick"><option>正交的</option></select></div>
    <div class="d-flex mb-1"><div class="target d-flex align-items-center"><svg width="15" height="15"><path d="M.5 0v15" stroke="#333"/><path d="M1 1h14v10H1z" fill="#fff" stroke="#333"/><path d="M1 1h3v3H1zM7 1h3v3H7zM4 4h3v3H4zM10 4h4v3h-4zM1 7h3v3H1zM7 7h3v3H7z" fill="#222" stroke="none"/></svg>指定位置</div><button class="ib lg gapb hotbtn" aria-label="指定位置"><svg width="24" height="24"><use href="#movev" width="24" height="24"/></svg></button></div>
    <div class="grp"><button class="gh"><i class="tri-d"></i>放置</button>
     <div class="fr"><label for="s5">方法</label><div class="pickwrap"><select id="s5" class="pick ic"><option>铰链副</option></select><svg width="16" height="16"><path d="M1 10h5v5H1zM10 1h5v5h-5z" stroke="#222"/><path d="M3 13l10-9M8 0l8 7" stroke="#d01010" stroke-width="1.500"/></svg></div></div>
     <button class="gh sub"><i class="tri-r"></i>跟踪</button>
     <div class="fr chk"><input class="form-check-input" type="checkbox" id="c2"><label for="c2">关联对齐</label></div></div>
    <div class="grp pb-2"><button class="gh"><i class="tri-d"></i>移动视图</button>
     <div class="fr tall"><span>指定屏幕位置</span><button class="ib lg" aria-label="指定屏幕位置"><svg width="24" height="24"><use href="#movev" width="24" height="24"/></svg></button></div></div></div>
   <div class="grp shut"><button class="gh"><i class="tri-r"></i>设置</button></div>
   <div class="grp shut"><button class="gh"><i class="tri-r"></i>预览</button></div>
   <div class="collapse-bar d-flex justify-content-center"><svg width="10" height="5" class="mt-1"><path d="M0 5l5-5 5 5z" fill="#1e1e1e" stroke="none"/></svg></div>
   <div class="dlg-foot d-flex justify-content-end"><button class="close-btn">关闭</button></div>
  </div>
  <span class="pin" style="left:227px;top:110px">2</span>
 </section>
</main>

<footer class="status flex-shrink-0">指定放置视图的位置</footer>
<div class="ime d-flex align-items-center">
 <svg class="sogou" width="33" height="28"><path d="M1 7l26-5 5 23-24 6-4-2z" fill="#f4511e" stroke="none"/><path d="M26 8C18 4 9 9 13 13s14 0 12 6-14 5-18 1" stroke="#fff" stroke-width="4"/></svg>
 <span class="mk"><b>英</b></span><span class="mk"><svg width="14" height="14"><circle cx="3" cy="4" r="2" fill="currentColor" stroke="none"/><path d="M11 7c2 2 0 4-2 6" stroke-width="2.500"/></svg></span>
 <span class="mk"><svg width="14" height="17"><rect x="4" y="0" width="6" height="10" rx="3" fill="currentColor" stroke="none"/><path d="M2 6c0 9 10 9 10 0M7 13v3M5 16h4" stroke-width="1.800"/></svg></span>
 <span class="mk"><svg width="15" height="12"><rect x="1" y="1" width="13" height="10" rx="1" stroke-width="1.800"/><path d="M3 4h9M3 6.500h9" stroke-dasharray="2 1" stroke-width="1.500"/><path d="M4 9h7"/></svg></span>
 <span class="mk"><svg width="16" height="14"><path d="M4 1l2 1h4l2-1 4 4-3 2v7H3V7L0 5z" fill="#a96cf5" stroke="none"/><path d="M4 1l2 1h2v5L3 9V7L0 5z" fill="#f26a6a" stroke="none"/></svg></span>
 <span class="mk"><svg width="16" height="14"><rect x="1" y="2" width="14" height="8" rx="4" fill="currentColor"/><path d="M3 6h4M5 4v4M10 5h1M12 7h1" stroke="#fff"/><path d="M3 10l-2 3M13 10l2 3" stroke-width="3"/></svg></span>
 <span class="mk"><svg width="14" height="14"><path d="M0 0h6v6H0zM0 8h6v6H0zM8 8h6v6H8z" fill="currentColor" stroke="none"/><circle cx="11" cy="3" r="2.500" stroke-width="1.500"/></svg></span>
</div>
<div class="wm">CSDN @山涧果子</div>

<script>
// [guide slots, icons, label, checked, modifier]
const rows = [
 ["d-", "ok sheets", "图纸", 0], ["v v-", "ok sheetpg", "图纸页 \"A3_1\" (工作...", 1],
 ["v v t", "ok clip", "导入的 \"Isometr...", 1], ["v v v+", "ok topv", "导入的 \"Top@1\"", 1],
 ["v v u", "ok secv", "表区域 \"SX@5\" A", 1], ["v u", "ask dir", "过时", 0],
 ["v+", "grpi", "组", 0], ["u-", "ball hist", "模型历史记录", 1],
 ["n t", "eyeoff csys", "基准坐标系 (0)", 1, "off"], ["n t", "eyeoff sk", "草图 (1) \"SKETCH_0...", 1, "off"],
 ["n t", "eye ext", "拉伸 (2)", 1], ["n t", "eyeoff pln", "基准平面 (3)", 1, "off"],
 ["n t", "eyeoff sk", "草图 (4) \"SKETCH_0...", 1, "off"], ["n t", "eye ext", "拉伸 (5)", 1],
 ["n t", "eye blend", "边倒圆 (6)", 1], ["n t", "eyeoff pln", "基准平面 (7)", 1, "off"],
 ["n t", "eyeoff sk", "草图 (8) \"SKETCH_0...", 1, "off"], ["n t", "eye ext", "拉伸 (9)", 1],
 ["n t", "eye blend", "边倒圆 (10)", 1], ["n t", "eyeoff sk", "草图 (11) \"SKETCH_...", 1, "off"],
 ["n t", "eye rib", "筋板 (12)", 1], ["n t", "eye hole", "Ø25 孔 (13)", 1],
 ["n t", "eye cbore", "Ø18 沉头孔 (14)", 1], ["n t", "eye hole", "Ø10 孔 (15)", 1],
 ["n u", "eye hole", "Ø10 孔 (16)", 1, "fw-bold"]
];
const ico = (n, s) => `<svg width="${s}" height="${s}"><use href="#${n}" width="${s}" height="${s}"/></svg>`;
let html = rows.map(([g, ic, t, ok, m]) => {
  let parts = g.split(" ");
  // Children of the history node draw their guide line in the second slot.
  if (parts[0] === "n") parts = ["n", parts[1] === "t" ? "v" : "u"];
  const slots = parts.map((s, i) => {
    const box = s[1] === "+" ? ico("plus", 9) : s[1] === "-" ? ico("minus", 9) : "";
    const last = i === parts.length - 1 ? " t" : "";
    return `<span class="slot ${s[0]}${last}">${box}</span>`;
  }).join("");
  return `<tr><td><div class="node ${m || ""}">${slots}${ic.split(" ").map(n => ico(n, 16)).join("")}<span class="lbl">${t}</span></div></td><td>${m === "fw-bold" ? `<div class="ps-1">${ico("cur", 16)}</div>` : ""}</td><td>${ok ? `<div class="ps-1">${ico("ok", 16)}</div>` : ""}</td><td></td></tr>`;
}).join("");
for (let i = 0; i < 8; i++) html += "<tr><td></td><td></td><td></td><td></td></tr>";
document.getElementById("rows").innerHTML = html;
</script>
</body>
</html>
